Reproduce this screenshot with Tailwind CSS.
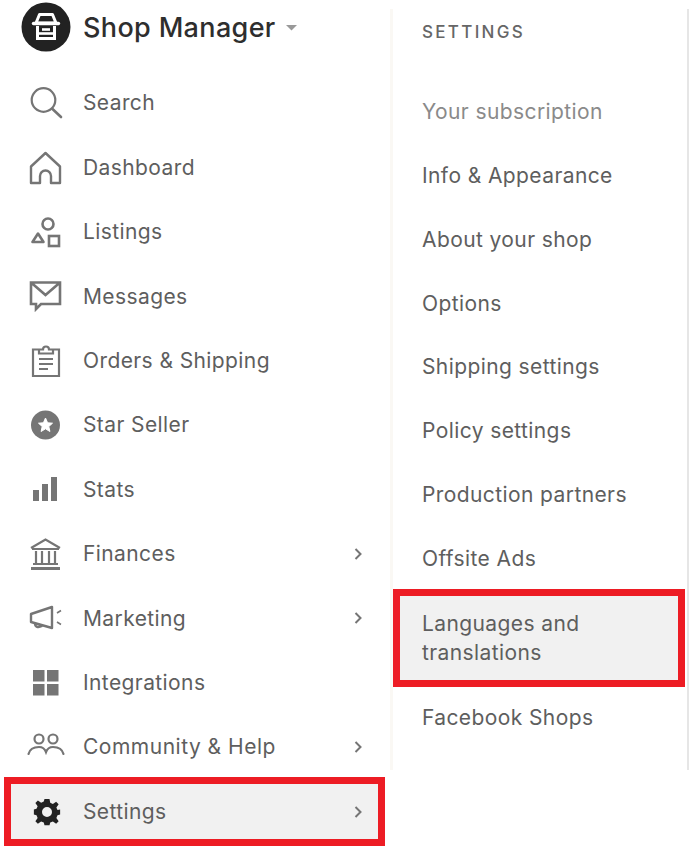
<!DOCTYPE html>
<html>
<head>
    <title>Shop Manager</title>
    <script src="https://cdn.jsdelivr.net/npm/@tailwindcss/browser@4"></script>
</head>
<body class="bg-white font-['Inter',sans-serif] text-[#5e5e5e] overflow-hidden">
<div class="flex w-[690px] h-[851px]">

    <!-- Sidebar -->
    <div class="w-[390px] shrink-0">
        <div class="flex items-center h-[52px] pl-[21px] pt-[1px] mb-[19px]">
            <svg class="w-[50px] h-[50px] shrink-0" viewBox="0 0 50 50">
                <circle cx="25" cy="25" r="24.500" fill="#222"/>
                <path d="M15 21 L18.500 12.500 H31.500 L35 21 Z" fill="none" stroke="#fff" stroke-width="3" stroke-linejoin="round"/>
                <path d="M16.500 24 V36.500 H33.500 V24" fill="none" stroke="#fff" stroke-width="3"/>
                <path d="M21 27.500 H29" stroke="#fff" stroke-width="2.600"/>
                <path d="M17 31.500 H33" stroke="#fff" stroke-width="2.600"/>
                <path d="M12.500 21.500 H37.500" stroke="#fff" stroke-width="3.400" stroke-linecap="round"/>
            </svg>
            <span class="ml-[12px] mt-[3px] text-[27px] font-medium text-[#2e2e2e] tracking-[0.35px]">Shop Manager</span>
            <svg class="ml-[10px] mt-[3px] w-[11px] h-[6px]" viewBox="0 0 11 6"><path d="M0 0H11L5.500 5.500Z" fill="#999"/></svg>
        </div>

        <nav class="text-[21px] tracking-[0.4px]">
            <a class="flex items-center h-[64.400px]">
                <svg class="ml-[29px] w-[34px] h-[34px] shrink-0" viewBox="0 0 34 34" fill="none" stroke="#757575" stroke-width="2.200">
                    <circle cx="14.500" cy="14" r="11.800"/><path d="M23.500 23 L32 31" stroke-linecap="round" stroke-width="2.600"/>
                </svg>
                <span class="ml-[20px]">Search</span>
            </a>
            <a class="flex items-center h-[64.400px]">
                <svg class="ml-[29px] w-[34px] h-[34px] shrink-0" viewBox="0 0 34 34" fill="none" stroke="#757575" stroke-width="2.400">
                    <path d="M2 15.500 L16.500 2 L31 15.500 V32 H22 V25 A5.500 5.500 0 0 0 11 25 V32 H2 Z" stroke-linejoin="round"/>
                </svg>
                <span class="ml-[20px]">Dashboard</span>
            </a>
            <a class="flex items-center h-[64.400px]">
                <svg class="ml-[29px] w-[34px] h-[34px] shrink-0" viewBox="0 0 34 34" fill="none" stroke="#757575" stroke-width="2.600">
                    <circle cx="19" cy="9" r="5.500"/><path d="M9 18.500 L14.500 27 H3.500 Z" stroke-linejoin="round"/><rect x="20" y="21" width="10" height="10"/>
                </svg>
                <span class="ml-[20px]">Listings</span>
            </a>
            <a class="flex items-center h-[64.400px]">
                <svg class="ml-[29px] w-[34px] h-[34px] shrink-0" viewBox="0 0 34 34" fill="none" stroke="#757575" stroke-width="2.600">
                    <path d="M2 3.500 H31 V25 H12 L7 30 V25 H2 Z M2 3.500 L16.500 16 L31 3.500" stroke-linejoin="miter"/>
                </svg>
                <span class="ml-[20px]">Messages</span>
            </a>
            <a class="flex items-center h-[64.400px]">
                <svg class="ml-[29px] w-[34px] h-[34px] shrink-0" viewBox="0 0 34 34" fill="none" stroke="#757575" stroke-width="2.200">
                    <path d="M10 5.500 H4 V32 H30 V5.500 H24 M10 9.500 H24 V5.500 H20 A3 3 0 0 0 14 5.500 H10 Z M10 15 H24 M10 20 H24 M10 25 H19"/>
                </svg>
                <span class="ml-[20px]">Orders &amp; Shipping</span>
            </a>
            <a class="flex items-center h-[64.400px]">
                <svg class="ml-[29px] w-[34px] h-[34px] shrink-0" viewBox="0 0 34 34">
                    <circle cx="16.500" cy="17" r="14.500" fill="#757575"/>
                    <path d="M16.500 10 L18.600 14.800 L23.500 15.200 L19.800 18.500 L20.900 23.500 L16.500 20.800 L12.100 23.500 L13.200 18.500 L9.500 15.200 L14.400 14.800 Z" fill="#fff" stroke="#fff" stroke-width="1" stroke-linejoin="round"/>
                </svg>
                <span class="ml-[20px]">Star Seller</span>
            </a>
            <a class="flex items-center h-[64.400px]">
                <svg class="ml-[29px] w-[34px] h-[34px] shrink-0" viewBox="0 0 34 34" fill="#757575">
                    <rect x="4" y="17" width="6" height="11"/><rect x="13" y="11" width="6" height="17"/><rect x="22" y="4" width="6" height="24"/>
                </svg>
                <span class="ml-[20px]">Stats</span>
            </a>
            <a class="flex items-center h-[64.400px]">
                <svg class="ml-[29px] w-[34px] h-[34px] shrink-0" viewBox="0 0 34 34" fill="none" stroke="#757575" stroke-width="2.200">
                    <path d="M2 11 L16.500 2.500 L31 11 M3 12 H30 M7 14 V26 M13 14 V26 M20 14 V26 M26 14 V26 M4 27 H29"/>
                    <path d="M2 31.500 H31" stroke-width="3"/>
                </svg>
                <span class="ml-[20px] flex-1">Finances</span>
                <svg class="w-[8px] h-[14px] mr-[28px]" viewBox="0 0 8 14" fill="none" stroke="#757575" stroke-width="2"><path d="M1.500 2 L6.500 7 L1.500 12"/></svg>
            </a>
            <a class="flex items-center h-[64.400px]">
                <svg class="ml-[29px] w-[34px] h-[34px] shrink-0" viewBox="0 0 34 34" fill="none" stroke="#757575" stroke-width="2.400">
                    <path d="M2 13 L23 6 V27 L2 21 Z M6 22.500 C6 26 9 27 13 25" stroke-linejoin="round"/>
                    <path d="M28 12 L32 9.500 M28 21 L32 23.500" stroke-width="1.600"/>
                </svg>
                <span class="ml-[20px] flex-1">Marketing</span>
                <svg class="w-[8px] h-[14px] mr-[28px]" viewBox="0 0 8 14" fill="none" stroke="#757575" stroke-width="2"><path d="M1.500 2 L6.500 7 L1.500 12"/></svg>
            </a>
            <a class="flex items-center h-[64.400px]">
                <svg class="ml-[29px] w-[34px] h-[34px] shrink-0" viewBox="0 0 34 34" fill="#757575">
                    <rect x="4" y="4" width="11.500" height="11.500"/><rect x="18" y="4" width="11.500" height="11.500"/><rect x="4" y="18" width="11.500" height="11.500"/><rect x="18" y="18" width="11.500" height="11.500"/>
                </svg>
                <span class="ml-[20px]">Integrations</span>
            </a>
            <a class="flex items-center h-[64.400px]">
                <svg class="ml-[27px] w-[38px] h-[34px] shrink-0" viewBox="0 0 38 34" fill="none" stroke="#757575" stroke-width="2.200">
                    <circle cx="12" cy="9" r="4.500"/><circle cx="26" cy="9" r="4.500"/>
                    <path d="M1.500 24 C3 18 8 17 12 17 C15 17 17.500 18 19 22 C20.500 18 23 17 26 17 C30 17 35 18 36.500 24" stroke-linecap="round"/>
                </svg>
                <span class="ml-[18px] flex-1 tracking-[0.5px]">Community &amp; Help</span>
                <svg class="w-[8px] h-[14px] mr-[28px]" viewBox="0 0 8 14" fill="none" stroke="#757575" stroke-width="2"><path d="M1.500 2 L6.500 7 L1.500 12"/></svg>
            </a>
            <a class="flex items-center h-[69px] w-[381px] ml-[4px] -mt-[2px] border-[7px] border-[#ed1c24] bg-[#f1f1f1]">
                <svg class="ml-[21px] w-[30px] h-[30px] shrink-0" viewBox="0 0 24 24" fill="#222">
                    <path fill-rule="evenodd" d="M10 1.500 H14 L14.600 4.600 L16.700 5.500 L19.300 3.700 L20.300 4.700 L21.300 5.700 L19.500 8.300 L20.400 10.400 L22.500 10 V14 L20.400 14.600 L19.500 16.700 L21.300 19.300 L19.300 21.300 L16.700 19.500 L14.600 20.400 L14 22.500 H10 L9.400 20.400 L7.300 19.500 L4.700 21.300 L2.700 19.300 L4.500 16.700 L3.600 14.600 L1.500 14 V10 L3.600 9.400 L4.500 7.300 L2.700 4.700 L4.700 2.700 L7.300 4.500 L9.400 3.600 Z M12 8 A4 4 0 1 0 12 16 A4 4 0 1 0 12 8 Z"/>
                </svg>
                <span class="ml-[21px] flex-1">Settings</span>
                <svg class="w-[8px] h-[14px] mr-[16px]" viewBox="0 0 8 14" fill="none" stroke="#757575" stroke-width="2"><path d="M1.500 2 L6.500 7 L1.500 12"/></svg>
            </a>
        </nav>
    </div>

    <!-- Settings panel -->
    <div class="w-[299px] h-[761px] mt-[9px] border-l-[3px] border-l-[#faf8f4] border-r-2 border-r-[#e6e6e6] text-[21px] tracking-[0.4px]">
        <div class="h-[48px] pl-[29px] flex items-center text-[17px] font-medium tracking-[2.300px] text-[#666]">SETTINGS</div>
        <div class="flex items-center h-[63.800px] pl-[29px] mt-[23px] text-[#8a8a8a]">Your subscription</div>
        <a class="flex items-center h-[63.800px] pl-[29px]">Info &amp; Appearance</a>
        <a class="flex items-center h-[63.800px] pl-[29px]">About your shop</a>
        <a class="flex items-center h-[63.800px] pl-[29px]">Options</a>
        <a class="flex items-center h-[63.800px] pl-[29px]">Shipping settings</a>
        <a class="flex items-center h-[63.800px] pl-[29px]">Policy settings</a>
        <a class="flex items-center h-[63.800px] pl-[29px]">Production partners</a>
        <a class="flex items-center h-[63.800px] pl-[29px]">Offsite Ads</a>
        <a class="block w-[292px] h-[98px] -mt-[1px] border-[7px] border-[#ed1c24] bg-[#f1f1f1] pl-[22px] pt-[13px] leading-[29px]">Languages and<br>translations</a>
        <a class="flex items-center h-[60px] pl-[29px]">Facebook Shops</a>
    </div>
</div>
</body>
</html>
